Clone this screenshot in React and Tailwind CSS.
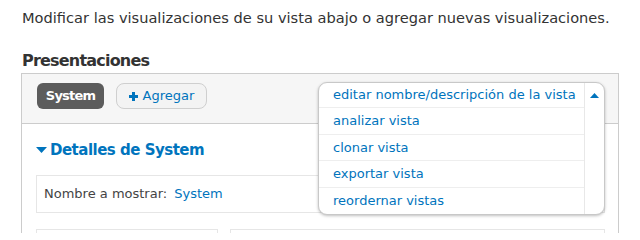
export default function App() {
  const items = ["analizar vista", "clonar vista", "exportar vista", "reordernar vistas"];
  return (
    <div className="relative w-[640px] h-[233px] overflow-hidden bg-white text-[#333]" style={{ fontFamily: '"DejaVu Sans", Verdana, sans-serif' }}>
      <p className="pl-[22px] pt-[9px] text-[14.6px] leading-[18px]">Modificar las visualizaciones de su vista abajo o agregar nuevas visualizaciones.</p>
      <h2 className="pl-[22px] mt-[24px] text-[16px] leading-[20px] font-bold tracking-[-0.8px] text-[#333]">Presentaciones</h2>
      <div className="ml-[21px] mt-[2px] w-[598px] h-[200px] border border-[#cccccc] bg-white">
        <div className="h-[50px] bg-[#f6f6f6] border-b border-[#cccccc] flex items-start gap-[12px] pl-[15px] pt-[9px]">
          <span className="w-[67px] h-[26px] rounded-[6px] bg-[#5c5c5c] text-white font-bold text-[13px] tracking-[-0.8px] flex items-center justify-center">System</span>
          <span className="w-[91px] h-[26px] rounded-[8px] bg-[#f3f3f3] border border-[#cfcfcf] text-[#0074bd] text-[13px] flex items-center justify-center gap-[5px]">
            <svg width="9" height="9" viewBox="0 0 9 9"><rect x="3" y="0" width="3" height="9" fill="#0074bd" /><rect x="0" y="3" width="9" height="3" fill="#0074bd" /></svg>
            Agregar
          </span>
        </div>
        <div className="pl-[14px] pr-[13px]">
          <div className="flex items-center gap-[3px] mt-[15px] h-[22px] text-[#0074bd] font-bold text-[15px] tracking-[-0.5px]">
            <svg width="11" height="7" viewBox="0 0 11 7"><path d="M0 0 L11 0 L5.5 6 Z" fill="#0074bd" /></svg>
            <span>Detalles de System</span>
          </div>
          <div className="mt-[14px] h-[38px] border border-[#e6e6e6] flex items-center pl-[7px] text-[13px]">
            <span className="text-[#444]">Nombre a mostrar:</span>
            <span className="ml-[7px] text-[#0074bd]">System</span>
          </div>
          <div className="mt-[16px] flex gap-[12px]">
            <div className="w-[182px] h-[20px] border border-[#e6e6e6]"></div>
            <div className="w-[376px] h-[20px] border border-[#e6e6e6]"></div>
          </div>
        </div>
      </div>
      <div className="absolute left-[318px] top-[82px] w-[287px] h-[133px] rounded-[9px] border border-[#c8c8c8] bg-white shadow-[0_1px_3px_rgba(0,0,0,0.25)] flex overflow-hidden text-[13px] text-[#0074bd]">
        <div className="w-[266px] border-r border-[#e8e8e8] flex flex-col">
          <div className="h-[25px] pl-[14px] flex items-center border-b border-[#eeeeee]">editar nombre/descripción de la vista</div>
          {items.map((t, i) => (
            <div key={t} className={"h-[26.5px] pl-[14px] flex items-center " + (i < 3 ? "border-b border-[#eeeeee]" : "")}>{t}</div>
          ))}
        </div>
        <div className="flex-1 flex justify-center pt-[10px]">
          <svg width="9" height="5" viewBox="0 0 9 5"><path d="M0 5 L9 5 L4.5 0 Z" fill="#0074bd" /></svg>
        </div>
      </div>
    </div>
  );
}
